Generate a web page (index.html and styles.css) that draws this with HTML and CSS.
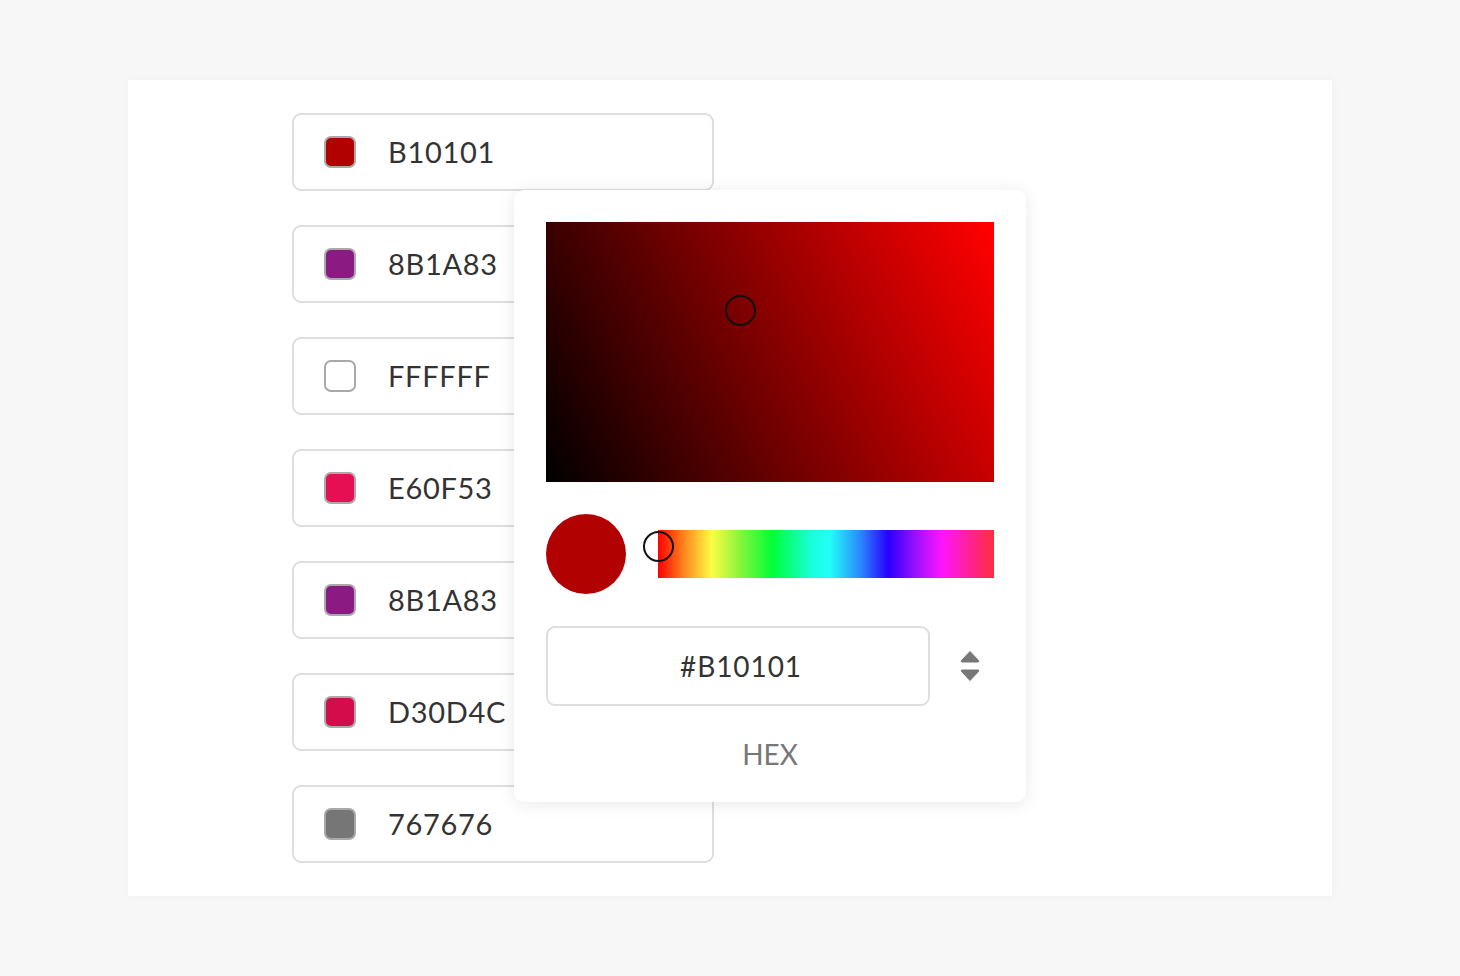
FILE: index.html
```html
<!DOCTYPE html>
<html lang="en">
<head>
<meta charset="utf-8">
<title>Color picker</title>
<link rel="stylesheet" href="styles.css">
</head>
<body>
<main class="panel">
  <div class="rows">
    <div class="row"><span class="swatch" style="background:#B10101"></span><span class="code">B10101</span></div>
    <div class="row"><span class="swatch" style="background:#8B1A83"></span><span class="code">8B1A83</span></div>
    <div class="row"><span class="swatch" style="background:#FFFFFF"></span><span class="code">FFFFFF</span></div>
    <div class="row"><span class="swatch" style="background:#E60F53"></span><span class="code">E60F53</span></div>
    <div class="row"><span class="swatch" style="background:#8B1A83"></span><span class="code">8B1A83</span></div>
    <div class="row"><span class="swatch" style="background:#D30D4C"></span><span class="code">D30D4C</span></div>
    <div class="row"><span class="swatch" style="background:#767676"></span><span class="code">767676</span></div>
  </div>
  <div class="popover">
    <div class="sv">
      <span class="sv-light"></span>
      <span class="sv-pointer"></span>
    </div>
    <div class="hue-row">
      <span class="preview"></span>
      <div class="hue">
        <span class="hue-thumb"></span>
      </div>
    </div>
    <div class="hex-row">
      <div class="hex-input">#B10101</div>
      <div class="stepper">
        <svg width="22" height="34" viewBox="0 0 22 34" aria-hidden="true">
          <path d="M11 2.5 L19.5 11.5 Q20.5 13 18.8 13 L3.2 13 Q1.5 13 2.5 11.5 Z" fill="#777" stroke="#777" stroke-width="1" stroke-linejoin="round"/>
          <path d="M11 31.5 L19.5 22.5 Q20.5 21 18.8 21 L3.2 21 Q1.5 21 2.5 22.5 Z" fill="#777" stroke="#777" stroke-width="1" stroke-linejoin="round"/>
        </svg>
      </div>
    </div>
    <div class="mode">HEX</div>
  </div>
</main>
</body>
</html>
```
FILE: styles.css
```css
* { box-sizing: border-box; }

html, body {
  margin: 0;
  padding: 0;
}

body {
  background: #f7f7f7;
  height: 976px;
  display: flex;
  align-items: center;
  justify-content: center;
  font-family: Lato, "Noto Sans", sans-serif;
  color: #333;
}

.panel {
  position: relative;
  width: 1204px;
  height: 816px;
  background: #fff;
  box-shadow: 0 0 10px rgba(0, 0, 0, 0.035);
  padding: 33px 0 33px 164px;
}

.rows {
  display: flex;
  flex-direction: column;
  gap: 34px;
}

.row {
  width: 422px;
  height: 78px;
  border: 2px solid #dedede;
  border-radius: 9px;
  display: flex;
  align-items: center;
  padding-left: 30px;
  gap: 32px;
}

.swatch {
  width: 32px;
  height: 32px;
  border: 2px solid #a9a9a9;
  border-radius: 7px;
  flex: none;
}

.code {
  font-size: 29px;
  letter-spacing: 0.7px;
  color: #333;
  position: relative;
  top: -1px;
}

.popover {
  position: absolute;
  left: 386px;
  top: 110px;
  width: 512px;
  height: 612px;
  background: #fff;
  border-radius: 10px;
  box-shadow: 0 2px 18px rgba(0, 0, 0, 0.09);
  padding: 32px 32px 0;
  display: flex;
  flex-direction: column;
}

.sv {
  position: relative;
  width: 448px;
  height: 260px;
  flex: none;
  isolation: isolate;
  background: linear-gradient(to right, #000000, #c80000);
}

.sv-light {
  position: absolute;
  inset: 0;
  background: linear-gradient(to bottom, #3a0000, #000000);
  mix-blend-mode: plus-lighter;
}

.sv-pointer {
  position: absolute;
  left: 179px;
  top: 73px;
  width: 31px;
  height: 31px;
  border: 2px solid #111;
  border-radius: 50%;
}

.hue-row {
  margin-top: 32px;
  height: 80px;
  display: flex;
  align-items: center;
  gap: 32px;
}

.preview {
  width: 80px;
  height: 80px;
  border-radius: 50%;
  background: #b10101;
  flex: none;
}

.hue {
  position: relative;
  flex: 1;
  height: 48px;
  background: linear-gradient(to right,
    #ff0000 0%,
    #ff8a1e 8%,
    #fcfc45 16%,
    #7ff53a 25%,
    #00ff35 34%,
    #1affdf 46%,
    #22fff6 51%,
    #2a8cff 60%,
    #2800ff 68.5%,
    #a010ff 77%,
    #ff14ff 84.5%,
    #ff2d3a 100%);
}

.hue-thumb {
  position: absolute;
  left: -15px;
  top: 1px;
  width: 31px;
  height: 31px;
  border: 2px solid #111;
  border-radius: 50%;
}

.hex-row {
  margin-top: 32px;
  height: 80px;
  display: flex;
  align-items: center;
}

.hex-input {
  width: 384px;
  height: 80px;
  border: 2px solid #dedede;
  border-radius: 9px;
  display: flex;
  align-items: center;
  justify-content: center;
  padding-left: 6px;
  font-size: 28px;
  letter-spacing: 0.9px;
  color: #333;
}

.stepper {
  flex: 1;
  display: flex;
  justify-content: center;
  align-items: center;
  padding-left: 16px;
}

.stepper svg { display: block; }

.mode {
  height: 96px;
  display: flex;
  align-items: center;
  justify-content: center;
  font-size: 28px;
  color: #777;
}
```
